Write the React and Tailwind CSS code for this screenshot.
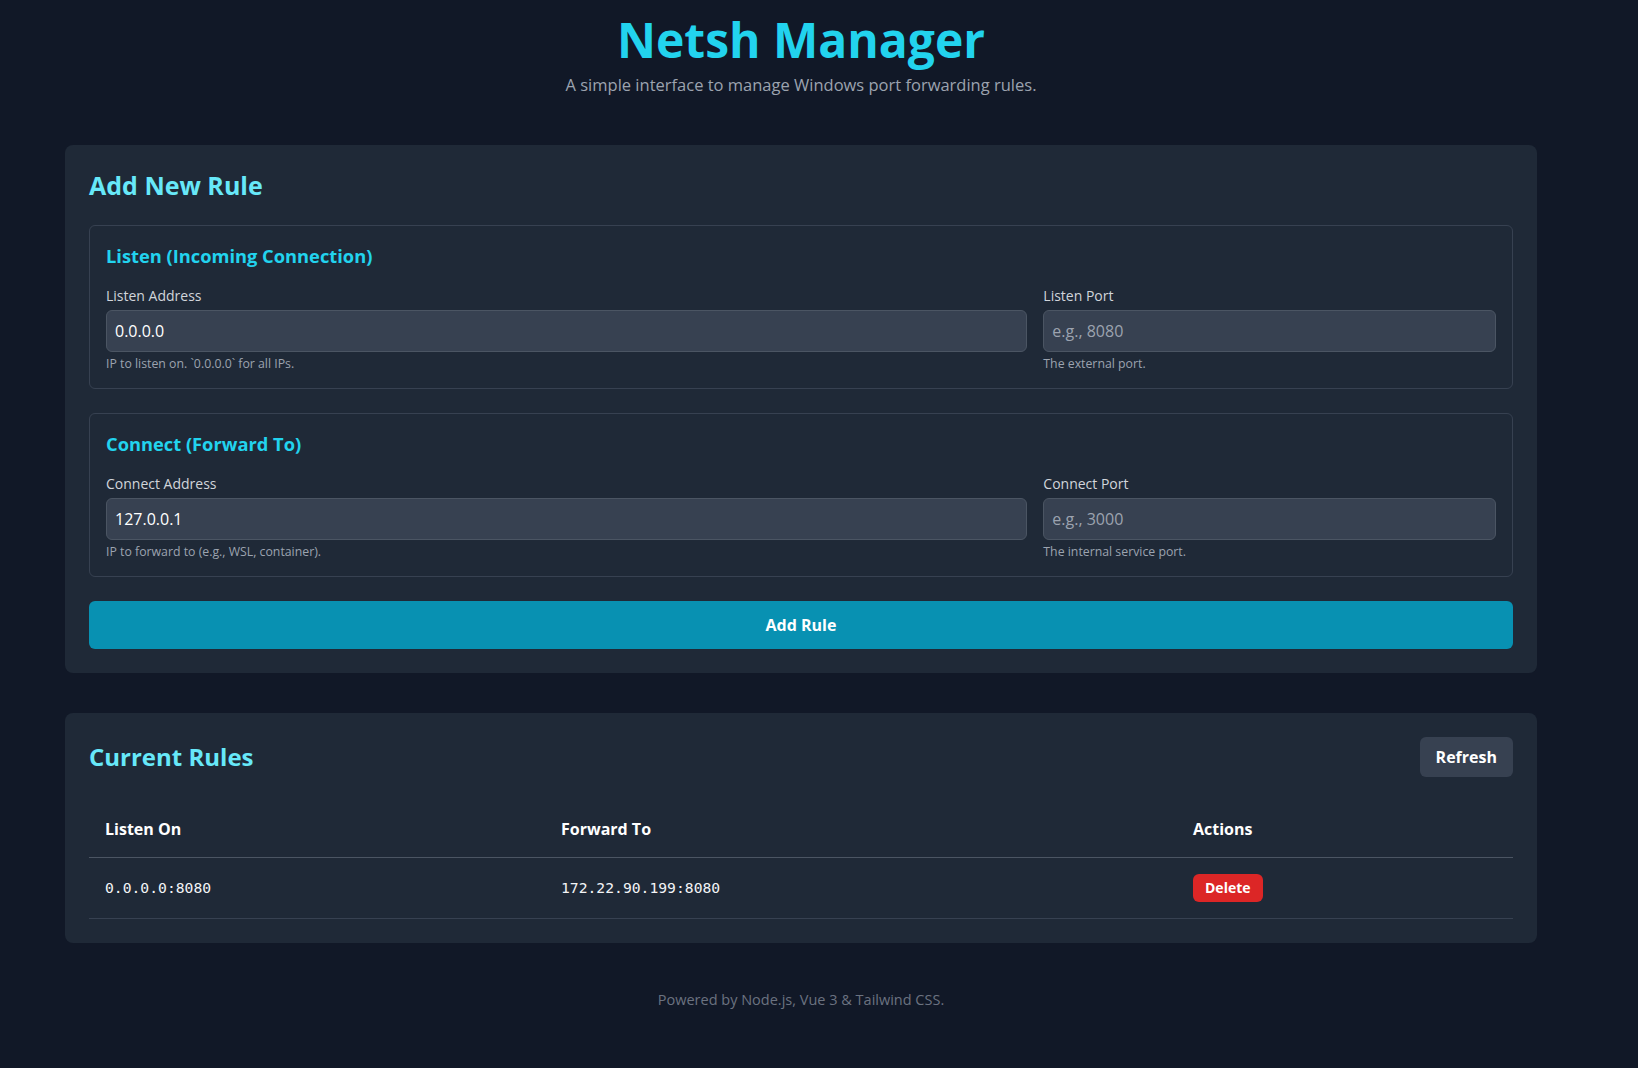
import React from "react";

const font = { fontFamily: '"Open Sans", "Noto Sans", sans-serif' };
const mono = { fontFamily: '"DejaVu Sans Mono", monospace' };

function Field({ label, value, placeholder, help, span }) {
  return (
    <div className={span ? "col-span-2" : "col-span-1"}>
      <label className="block text-[14px] leading-5 text-[#d1d5db] mb-1">{label}</label>
      <input
        readOnly
        defaultValue={value}
        placeholder={placeholder}
        className="block w-full rounded-md border border-[#4b5563] bg-[#374151] px-2 py-2 text-[16px] leading-6 text-white placeholder-[#9ca3af] outline-none"
      />
      <p className="mt-1 text-[12.3px] leading-4 text-[#9ca3af]">{help}</p>
    </div>
  );
}

function Group({ title, children }) {
  return (
    <div className="rounded-md border border-[#374151] p-4">
      <div className="mb-4 text-[18.3px] leading-7 font-bold text-[#22d3ee]">{title}</div>
      <div className="grid grid-cols-3 gap-4">{children}</div>
    </div>
  );
}

export default function App() {
  return (
    <div className="min-h-screen bg-[#111827] text-[#e5e7eb]" style={font}>
      <div className="w-[1602px] px-[65px] pt-[16px] pb-10">
        <header className="text-center mb-[46px]">
          <h1 className="text-[48px] leading-[48px] font-bold text-[#22d3ee]">Netsh Manager</h1>
          <p className="mt-[7px] text-[16.5px] leading-7 text-[#9ca3af]">
            A simple interface to manage Windows port forwarding rules.
          </p>
        </header>

        <section className="rounded-lg bg-[#1f2937] p-6">
          <h2 className="mb-6 text-[25px] leading-8 font-bold text-[#67e8f9]">Add New Rule</h2>
          <div className="space-y-6">
            <Group title="Listen (Incoming Connection)">
              <Field span label="Listen Address" value="0.0.0.0" help="IP to listen on. `0.0.0.0` for all IPs." />
              <Field label="Listen Port" value="" placeholder="e.g., 8080" help="The external port." />
            </Group>
            <Group title="Connect (Forward To)">
              <Field span label="Connect Address" value="127.0.0.1" help="IP to forward to (e.g., WSL, container)." />
              <Field label="Connect Port" value="" placeholder="e.g., 3000" help="The internal service port." />
            </Group>
            <button className="block w-full rounded-md bg-[#0891b2] py-3 text-[16px] leading-6 font-bold text-white">
              Add Rule
            </button>
          </div>
        </section>

        <section className="mt-10 rounded-lg bg-[#1f2937] p-6">
          <div className="mb-6 flex items-center justify-between">
            <h2 className="text-[24px] leading-8 font-bold text-[#67e8f9]">Current Rules</h2>
            <button className="rounded-md bg-[#374151] px-4 py-2 text-[16px] leading-6 font-bold text-white">
              Refresh
            </button>
          </div>
          <table className="w-full text-left">
            <thead>
              <tr className="border-b border-[#4b5563]">
                <th className="w-[456px] px-4 py-4 text-[16px] leading-6 font-bold text-white">Listen On</th>
                <th className="w-[632px] px-4 py-4 text-[16px] leading-6 font-bold text-white">Forward To</th>
                <th className="px-4 py-4 text-[16px] leading-6 font-bold text-white">Actions</th>
              </tr>
            </thead>
            <tbody>
              <tr className="border-b border-[#374151]">
                <td className="px-4 py-4 text-[14.7px] leading-5 text-[#f3f4f6]" style={mono}>
                  0.0.0.0:8080
                </td>
                <td className="px-4 py-4 text-[14.7px] leading-5 text-[#f3f4f6]" style={mono}>
                  172.22.90.199:8080
                </td>
                <td className="px-4 py-4">
                  <button className="rounded-md bg-[#dc2626] px-3 py-1 text-[14px] leading-5 font-bold text-white">
                    Delete
                  </button>
                </td>
              </tr>
            </tbody>
          </table>
        </section>

        <footer className="mt-[45px] text-center text-[14.5px] leading-6 text-[#6b7280]">
          Powered by Node.js, Vue 3 &amp; Tailwind CSS.
        </footer>
      </div>
    </div>
  );
}
